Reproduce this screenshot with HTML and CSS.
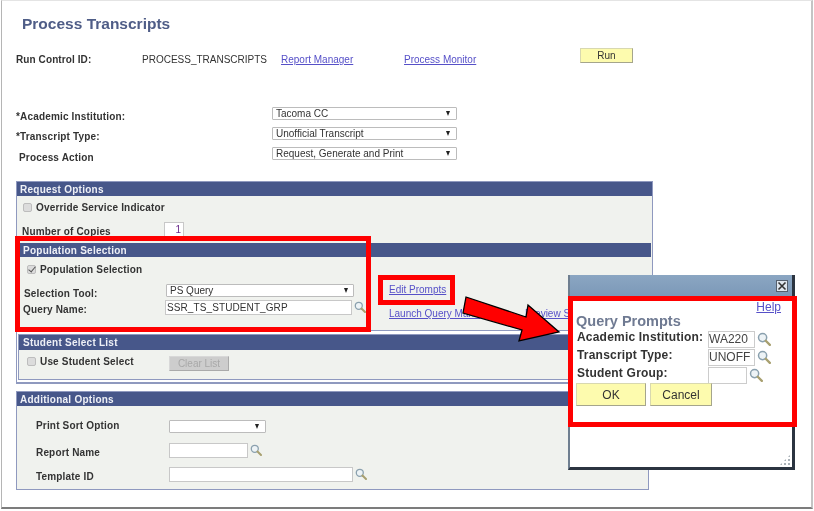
FILE: index.html
```html
<!DOCTYPE html>
<html lang="en">
<head>
  <meta charset="UTF-8" />
  <title>Process Transcripts</title>
  <link rel="stylesheet" href="styles.css">
</head>
<body>
  <div class="frame">

    <h1>Process Transcripts</h1>

    <!-- Run control row -->
    <div class="run-row">
      <strong class="run-label">Run Control ID:</strong>
      <span class="run-value">PROCESS_TRANSCRIPTS</span>
      <a class="link report-link" href="#">Report Manager</a>
      <a class="link monitor-link" href="#">Process Monitor</a>
      <button class="btn run-btn">Run</button>
    </div>

    <!-- Top form -->
    <div class="top-form">
      <label>*Academic Institution:</label>
      <div class="select">Tacoma CC<i class="caret"></i></div>
      <label>*Transcript Type:</label>
      <div class="select">Unofficial Transcript<i class="caret"></i></div>
      <label class="indent">Process Action</label>
      <div class="select">Request, Generate and Print<i class="caret"></i></div>
    </div>

    <!-- Request Options -->
    <section class="panel request-panel">
      <div class="panel-head">Request Options</div>
      <div class="request-body">
        <div class="check-row override-row">
          <input type="checkbox" disabled>
          <label>Override Service Indicator</label>
        </div>
        <div class="copies-row">
          <label>Number of Copies</label>
          <input class="copies" type="text" value="1">
        </div>

        <div class="panel-head sub-head">Population Selection</div>
        <div class="population">
          <div class="population-left">
            <div class="check-row">
              <input type="checkbox" checked disabled>
              <label>Population Selection</label>
            </div>
            <div class="pop-tool">
              <label>Selection Tool:</label>
              <div class="select tool-select">PS Query<i class="caret"></i></div>
            </div>
            <div class="pop-query">
              <label>Query Name:</label>
              <input class="query-input" type="text" value="SSR_TS_STUDENT_GRP">
              <svg class="lookup" viewBox="0 0 12 12"><use href="#glass"/></svg>
            </div>
          </div>
          <div class="population-right">
            <a class="link" href="#">Edit Prompts</a>
            <div class="link-line">
              <a class="link" href="#">Launch Query Manager</a>
              <a class="link" href="#">Preview Se</a>
            </div>
          </div>
        </div>
      </div>

      <div class="student-box">
        <div class="panel-head student-head">Student Select List</div>
        <div class="student-row">
          <div class="check-row">
            <input type="checkbox" disabled>
            <label>Use Student Select</label>
          </div>
          <button class="clear-btn">Clear List</button>
        </div>
      </div>
    </section>

    <!-- Additional Options -->
    <section class="panel extra-panel">
      <div class="panel-head">Additional Options</div>
      <div class="extra-form">
        <label class="high">Print Sort Option</label>
        <div class="select sort-select"><i class="caret"></i></div>
        <label class="low">Report Name</label>
        <div class="field">
          <input class="report-input" type="text">
          <svg class="lookup" viewBox="0 0 12 12"><use href="#glass"/></svg>
        </div>
        <label class="low">Template ID</label>
        <div class="field">
          <input class="template-input" type="text">
          <svg class="lookup" viewBox="0 0 12 12"><use href="#glass"/></svg>
        </div>
      </div>
    </section>

    <!-- Query Prompts popup, pasted over the page -->
    <div class="dialog">
      <div class="dialog-bar"><span class="dialog-close"><svg viewBox="0 0 10 10"><path d="M1.5 1.5l7 7M8.5 1.5l-7 7"/></svg></span></div>
      <div class="dialog-body">
        <a class="link help-link" href="#">Help</a>
        <div class="dialog-title">Query Prompts</div>
        <div class="prompt-grid">
          <label>Academic Institution:</label>
          <div class="field"><input class="prompt-input" type="text" value="WA220"><svg class="lookup big" viewBox="0 0 12 12"><use href="#glass"/></svg></div>
          <label>Transcript Type:</label>
          <div class="field"><input class="prompt-input" type="text" value="UNOFF"><svg class="lookup big" viewBox="0 0 12 12"><use href="#glass"/></svg></div>
          <label>Student Group:</label>
          <div class="field"><input class="prompt-input short" type="text"><svg class="lookup big" viewBox="0 0 12 12"><use href="#glass"/></svg></div>
        </div>
        <div class="dialog-buttons">
          <button class="btn ok-btn">OK</button>
          <button class="btn cancel-btn">Cancel</button>
        </div>
      </div>
      <div class="grip"></div>
    </div>

    <!-- Red callouts -->
    <div class="callout callout-population"></div>
    <div class="callout callout-edit"></div>
    <div class="callout callout-dialog"></div>
    <svg class="arrow" viewBox="0 0 110 60">
      <path d="M6 2L3 18L62 35L59 46L99 37L68 10L66 22Z"/>
    </svg>
  </div>

  <!-- Magnifier used by every lookup field -->
  <svg class="defs" width="0" height="0">
    <defs>
      <g id="glass">
        <circle cx="4.8" cy="4.8" r="3.5" fill="#edf3f6" stroke="#8aa0ae" stroke-width="1.3"/>
        <path d="M7.5 7.5L11 11" stroke="#a8a070" stroke-width="2" stroke-linecap="round"/>
      </g>
    </defs>
  </svg>
</body>
</html>
```

FILE: styles.css
```css
* {
  box-sizing: border-box;
}

body {
  margin: 0;
  font-family: "Liberation Sans", Arial, sans-serif;
  font-size: 10px;
  color: #333;
  background: #fff;
}

/* Page frame */
.frame {
  position: relative;
  width: 812px;
  height: 509px;
  margin-left: 1px;
  padding: 14px 0 0 14px;
  overflow: hidden;
  background: #fff;
  border-top: 1px solid #e4e4e4;
  border-left: 1px solid #b5b5b5;
  border-right: 2px solid #c4c4c4;
  border-bottom: 2px solid #7c7c7c;
  filter: blur(0.3px);
}

h1 {
  margin: 0 0 0 6px;
  font-size: 15.5px;
  line-height: 18px;
  color: #4f5d87;
}

label {
  font-weight: bold;
  color: #333;
  letter-spacing: 0.17px;
}

.link {
  color: #5650c8;
  text-decoration: underline;
  white-space: nowrap;
}

.btn {
  font-family: inherit;
  color: #333;
  padding: 0;
  background: #fdfbae;
  border: 1px solid #d8d8b0;
  border-right-color: #a5a58c;
  border-bottom-color: #a5a58c;
}

/* Run control row */
.run-row {
  display: flex;
  align-items: flex-end;
  height: 18px;
  margin-top: 15px;
  line-height: 13px;
}

.run-label {
  width: 126px;
  letter-spacing: 0.1px;
}

.run-value {
  width: 139px;
  white-space: nowrap;
}

.report-link {
  width: 123px;
}

.monitor-link {
  width: 176px;
}

.run-btn {
  align-self: flex-start;
  width: 53px;
  height: 15px;
  font-size: 10px;
  line-height: 11px;
}

/* Selects */
.select {
  position: relative;
  height: 13px;
  padding-left: 3px;
  font-size: 10px;
  line-height: 11px;
  white-space: nowrap;
  background: #fff;
  border: 1px solid #bcbcbc;
  border-radius: 1px;
}

.caret {
  position: absolute;
  right: 6px;
  top: 3px;
  width: 0;
  height: 0;
  border-left: 2.5px solid transparent;
  border-right: 2.5px solid transparent;
  border-top: 5px solid #222;
}

.top-form {
  display: grid;
  grid-template-columns: 256px 185px;
  grid-auto-rows: 13px;
  row-gap: 7px;
  margin-top: 41px;
}

.top-form label {
  line-height: 20px;
}

.top-form .indent {
  padding: 1px 0 0 3px;
}

/* Panels */
.panel {
  background: #f0f2ee;
  border: 1px solid #8f99bf;
}

.panel-head {
  height: 14px;
  padding-left: 3px;
  font-weight: bold;
  letter-spacing: 0.25px;
  line-height: 15px;
  color: #eef0f6;
  background: #47578a;
}

.sub-head {
  margin: 0 1px;
  padding-left: 5px;
}

.request-panel {
  width: 637px;
  margin-top: 21px;
  background: #fff;
  border-bottom-width: 2px;
}

.request-body {
  padding-top: 5px;
  background: #f0f2ee;
}

.check-row {
  display: flex;
  align-items: center;
  height: 12px;
}

.check-row input {
  position: relative;
  appearance: none;
  flex: none;
  width: 9px;
  height: 9px;
  margin: 0 4px 0 0;
  background: #dcdcdc;
  border: 1px solid #bdbdbd;
  border-radius: 2px;
}

.check-row input:checked::after {
  content: "";
  position: absolute;
  left: 2px;
  top: -1px;
  width: 3px;
  height: 6px;
  border-right: 1.5px solid #555;
  border-bottom: 1.5px solid #555;
  transform: rotate(40deg);
}

.override-row {
  margin-left: 6px;
}

.copies-row {
  display: flex;
  height: 21px;
  margin: 9px 0 0 5px;
}

.copies-row label {
  width: 142px;
  line-height: 20px;
}

.copies {
  width: 20px;
  height: 15px;
  padding: 0 2px;
  font-size: 10px;
  text-align: right;
  color: #6a2a8a;
  border: 1px solid #c8c8c8;
}

/* Population section */
.population {
  display: flex;
  height: 74px;
  border-bottom: 1px solid #8f99bf;
}

.population-left {
  width: 372px;
  padding: 6px 0 0 10px;
}

.pop-tool,
.pop-query {
  display: flex;
}

.pop-tool {
  height: 13px;
  margin-top: 9px;
  margin-left: -3px;
}

.pop-tool label,
.pop-query label {
  width: 142px;
  line-height: 20px;
}

.tool-select {
  width: 188px;
}

.tool-select .caret {
  right: 5px;
}

.pop-query {
  align-items: flex-start;
  height: 15px;
  margin-top: 3px;
  margin-left: -4px;
}

.query-input {
  width: 187px;
  height: 15px;
  padding: 0 1px;
  font-size: 10px;
  font-family: inherit;
  letter-spacing: 0.1px;
  color: #333;
  border: 1px solid #c8c8c8;
}

.lookup {
  flex: none;
  width: 12px;
  height: 12px;
  margin: 1px 0 0 2px;
}

.population-right {
  padding-top: 26px;
  line-height: 13px;
}

.link-line {
  display: flex;
  gap: 31px;
  margin-top: 11px;
}

/* Student select */
.student-box {
  margin: 3px 1px 2px;
  background: #f0f2ee;
  border: 1px solid #8f99bf;
}

.student-head {
  height: 15px;
  padding-left: 4px;
  line-height: 15px;
}

.student-row {
  display: flex;
  height: 29px;
  padding: 5px 0 0 8px;
}

.student-row .check-row {
  width: 142px;
}

.clear-btn {
  width: 60px;
  height: 15px;
  margin-top: 1px;
  padding: 0;
  font-size: 10px;
  font-family: inherit;
  color: #a8a8a8;
  background: #cdcdcd;
  border: 1px solid #d8d8d8;
  border-right-color: #aaa;
  border-bottom-color: #aaa;
}

/* Additional options */
.extra-panel {
  width: 633px;
  height: 99px;
  margin-top: 7px;
}

.extra-form {
  display: grid;
  grid-template-columns: 133px auto;
  grid-auto-rows: 16px;
  row-gap: 8px;
  align-items: center;
  padding: 12px 0 0 19px;
}

.extra-form .low {
  padding-top: 4px;
}

.extra-form .high {
  padding-bottom: 2px;
}

.field {
  display: flex;
  align-items: center;
}

.field .lookup {
  margin-top: 0;
}

.sort-select {
  width: 97px;
}

.report-input {
  width: 79px;
  height: 15px;
  border: 1px solid #c8c8c8;
}

.template-input {
  width: 184px;
  height: 15px;
  border: 1px solid #c8c8c8;
}

/* Query Prompts popup */
.dialog {
  position: absolute;
  left: 566px;
  top: 274px;
  width: 227px;
  height: 195px;
  background: #fff;
  border-left: 2px solid #6f7f90;
  border-right: 3px solid #2b3440;
  border-bottom: 3px solid #2b3440;
}

.dialog-bar {
  display: flex;
  justify-content: flex-end;
  align-items: center;
  height: 22px;
  padding-right: 4px;
  background: linear-gradient(#8ba6c2, #7b98b8);
}

.dialog-close {
  width: 12px;
  height: 12px;
  background: #dfe6ee;
  border: 1px solid #55606e;
}

.dialog-close svg {
  display: block;
  fill: none;
  stroke: #333;
  stroke-width: 1.6;
}

.dialog-body {
  position: relative;
  padding: 16px 0 0 6px;
}

.help-link {
  position: absolute;
  right: 11px;
  top: 3px;
  font-size: 12px;
}

.dialog-title {
  font-size: 14.5px;
  font-weight: bold;
  line-height: 16px;
  color: #6f7a92;
}

.prompt-grid {
  display: grid;
  grid-template-columns: 132px auto;
  grid-auto-rows: 18px;
  margin-top: 1px;
}

.prompt-grid label {
  padding-left: 1px;
  font-size: 12px;
  letter-spacing: 0.2px;
  line-height: 14px;
}

.prompt-input {
  width: 47px;
  height: 17px;
  padding: 0;
  font-size: 12px;
  font-family: inherit;
  color: #444;
  border: 1px solid #ccc;
}

.prompt-input.short {
  width: 39px;
}

.lookup.big {
  width: 14px;
  height: 14px;
}

.dialog-buttons {
  display: flex;
  gap: 4px;
  margin-top: -1px;
}

.ok-btn,
.cancel-btn {
  height: 23px;
  font-size: 12px;
}

.ok-btn {
  width: 70px;
}

.cancel-btn {
  width: 62px;
}

.grip {
  position: absolute;
  right: 1px;
  bottom: 1px;
  width: 12px;
  height: 12px;
  background-image: radial-gradient(#aab2b8 1px, transparent 1px);
  background-size: 4px 4px;
  clip-path: polygon(100% 0, 100% 100%, 0 100%);
}

/* Red annotations */
.callout {
  position: absolute;
  border: 5px solid #f00;
}

.callout-population {
  left: 13px;
  top: 235px;
  width: 356px;
  height: 96px;
}

.callout-edit {
  left: 376px;
  top: 274px;
  width: 77px;
  height: 30px;
}

.callout-dialog {
  left: 566px;
  top: 295px;
  width: 229px;
  height: 131px;
  border-width: 5.5px;
}

.arrow {
  position: absolute;
  left: 458px;
  top: 294px;
  width: 110px;
  height: 60px;
  fill: #f00;
  stroke: #000;
  stroke-width: 1.3;
}

.defs {
  position: absolute;
}
```
